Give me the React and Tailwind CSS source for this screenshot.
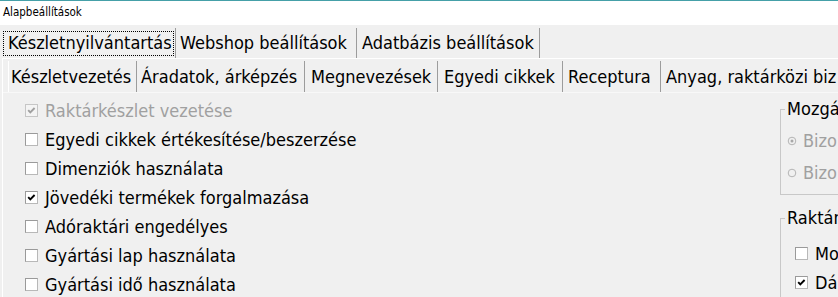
import React from "react";

function Box({ checked, disabled }) {
  return (
    <span
      className={
        disabled
          ? "w-[13px] h-[13px] shrink-0 border border-[#c6c6c6] bg-[#f4f4f4] flex items-center justify-center"
          : "w-[13px] h-[13px] shrink-0 border border-t-[#9a9a9a] border-l-[#9a9a9a] border-r-[#b8b8b8] border-b-[#b8b8b8] bg-white flex items-center justify-center"
      }
    >
      {checked && (
        <svg width="11" height="11" viewBox="0 0 11 11">
          <path
            d="M2.2 5.2 L4.3 7.4 L8.6 3"
            fill="none"
            stroke={disabled ? "#a0a0a0" : "#000"}
            strokeWidth="1.9"
          />
        </svg>
      )}
    </span>
  );
}

function Radio({ checked }) {
  return (
    <svg width="10" height="10" viewBox="0 0 10 10" className="shrink-0">
      <circle cx="5" cy="5" r="3.8" fill="none" stroke="#b4b4b4" strokeWidth="1" />
      {checked && <circle cx="5" cy="5" r="1.5" fill="#a8a8a8" />}
    </svg>
  );
}

const items = [
  { label: "Raktárkészlet vezetése", checked: true, disabled: true },
  { label: "Egyedi cikkek értékesítése/beszerzése" },
  { label: "Dimenziók használata" },
  { label: "Jövedéki termékek forgalmazása", checked: true },
  { label: "Adóraktári engedélyes" },
  { label: "Gyártási lap használata" },
  { label: "Gyártási idő használata" },
];

export default function App() {
  return (
    <div className="w-[838px] h-[297px] overflow-hidden bg-[#f0f0f0] flex flex-col text-black font-['DejaVu_Sans_Condensed','DejaVu_Sans',sans-serif] font-stretch-condensed">
      <div className="h-[25px] shrink-0 bg-white border-t border-[#45a0a8] flex items-center pl-[3px] text-[11.5px] leading-none">
        Alapbeállítások
      </div>

      {/* top tabs */}
      <div className="mt-[3px] ml-[2px] h-[30px] shrink-0 flex text-[18px] leading-none whitespace-nowrap">
        <div className="w-[174px] shrink-0 h-full border-r border-[#9c9c9c] flex items-center px-[1px]">
          <div className="w-full h-[25px] border border-dotted border-black flex items-center pl-[4px]">
            Készletnyilvántartás
          </div>
        </div>
        <div className="w-[181px] shrink-0 h-full border-r border-[#9c9c9c] flex items-center pl-[4px]">
          Webshop beállítások
        </div>
        <div className="w-[183px] shrink-0 h-full border-r border-[#9c9c9c] flex items-center pl-[5px]">
          Adatbázis beállítások
        </div>
      </div>

      {/* panel */}
      <div className="ml-[2px] flex-1 flex flex-col border-l border-t border-white">
        <div className="mt-[2px] ml-[5px] h-[31px] shrink-0 flex text-[18px] leading-none whitespace-nowrap">
          <div className="w-[129px] shrink-0 h-full border-l border-white border-r border-r-[#9c9c9c] flex items-center pl-[2px]">
            Készletvezetés
          </div>
          <div className="w-[168px] shrink-0 h-full border-r border-[#9c9c9c] flex items-center pl-[4px]">
            Áradatok, árképzés
          </div>
          <div className="w-[133px] shrink-0 h-full border-r border-[#9c9c9c] flex items-center pl-[6px]">
            Megnevezések
          </div>
          <div className="w-[125px] shrink-0 h-full border-r border-[#9c9c9c] flex items-center pl-[6px]">
            Egyedi cikkek
          </div>
          <div className="w-[98px] shrink-0 h-full border-r border-[#9c9c9c] flex items-center pl-[5px]">
            Receptura
          </div>
          <div className="shrink-0 h-full flex items-center pl-[5px]">
            Anyag, raktárközi biz
          </div>
        </div>

        <div className="flex flex-1 border-t border-[#f8f8f8] text-[18px] leading-none">
          <div className="w-[777px] shrink-0 pl-[22px] pt-[3px] flex flex-col">
            {items.map((it) => (
              <div key={it.label} className="h-[29px] flex items-center gap-[7px] whitespace-nowrap">
                <Box checked={it.checked} disabled={it.disabled} />
                <span className={it.disabled ? "text-[#a0a0a0]" : "text-black"}>{it.label}</span>
              </div>
            ))}
          </div>

          <div className="w-[140px] shrink-0 flex flex-col whitespace-nowrap">
            <fieldset className="mt-[6px] w-[120px] border border-[#c8c8c8] pb-[5px] pl-[6px]">
              <legend className="-ml-[2px] px-[2px] leading-[20px]">Mozgá</legend>
              <div className="pt-[6px] flex flex-col text-[#a0a0a0]">
                <div className="h-[32px] flex items-center gap-[6px]">
                  <Radio checked />
                  <span>Bizo</span>
                </div>
                <div className="h-[32px] flex items-center gap-[6px]">
                  <Radio />
                  <span>Bizo</span>
                </div>
              </div>
            </fieldset>

            <fieldset className="mt-[13px] w-[120px] border border-[#c8c8c8] pl-[14px]">
              <legend className="-ml-[10px] px-[2px] leading-[20px]">Raktár</legend>
              <div className="pt-[11px] flex flex-col">
                <div className="h-[29px] flex items-center gap-[7px]">
                  <Box />
                  <span>Mo</span>
                </div>
                <div className="h-[29px] flex items-center gap-[7px]">
                  <Box checked />
                  <span>Dá</span>
                </div>
              </div>
            </fieldset>
          </div>
        </div>
      </div>
    </div>
  );
}
